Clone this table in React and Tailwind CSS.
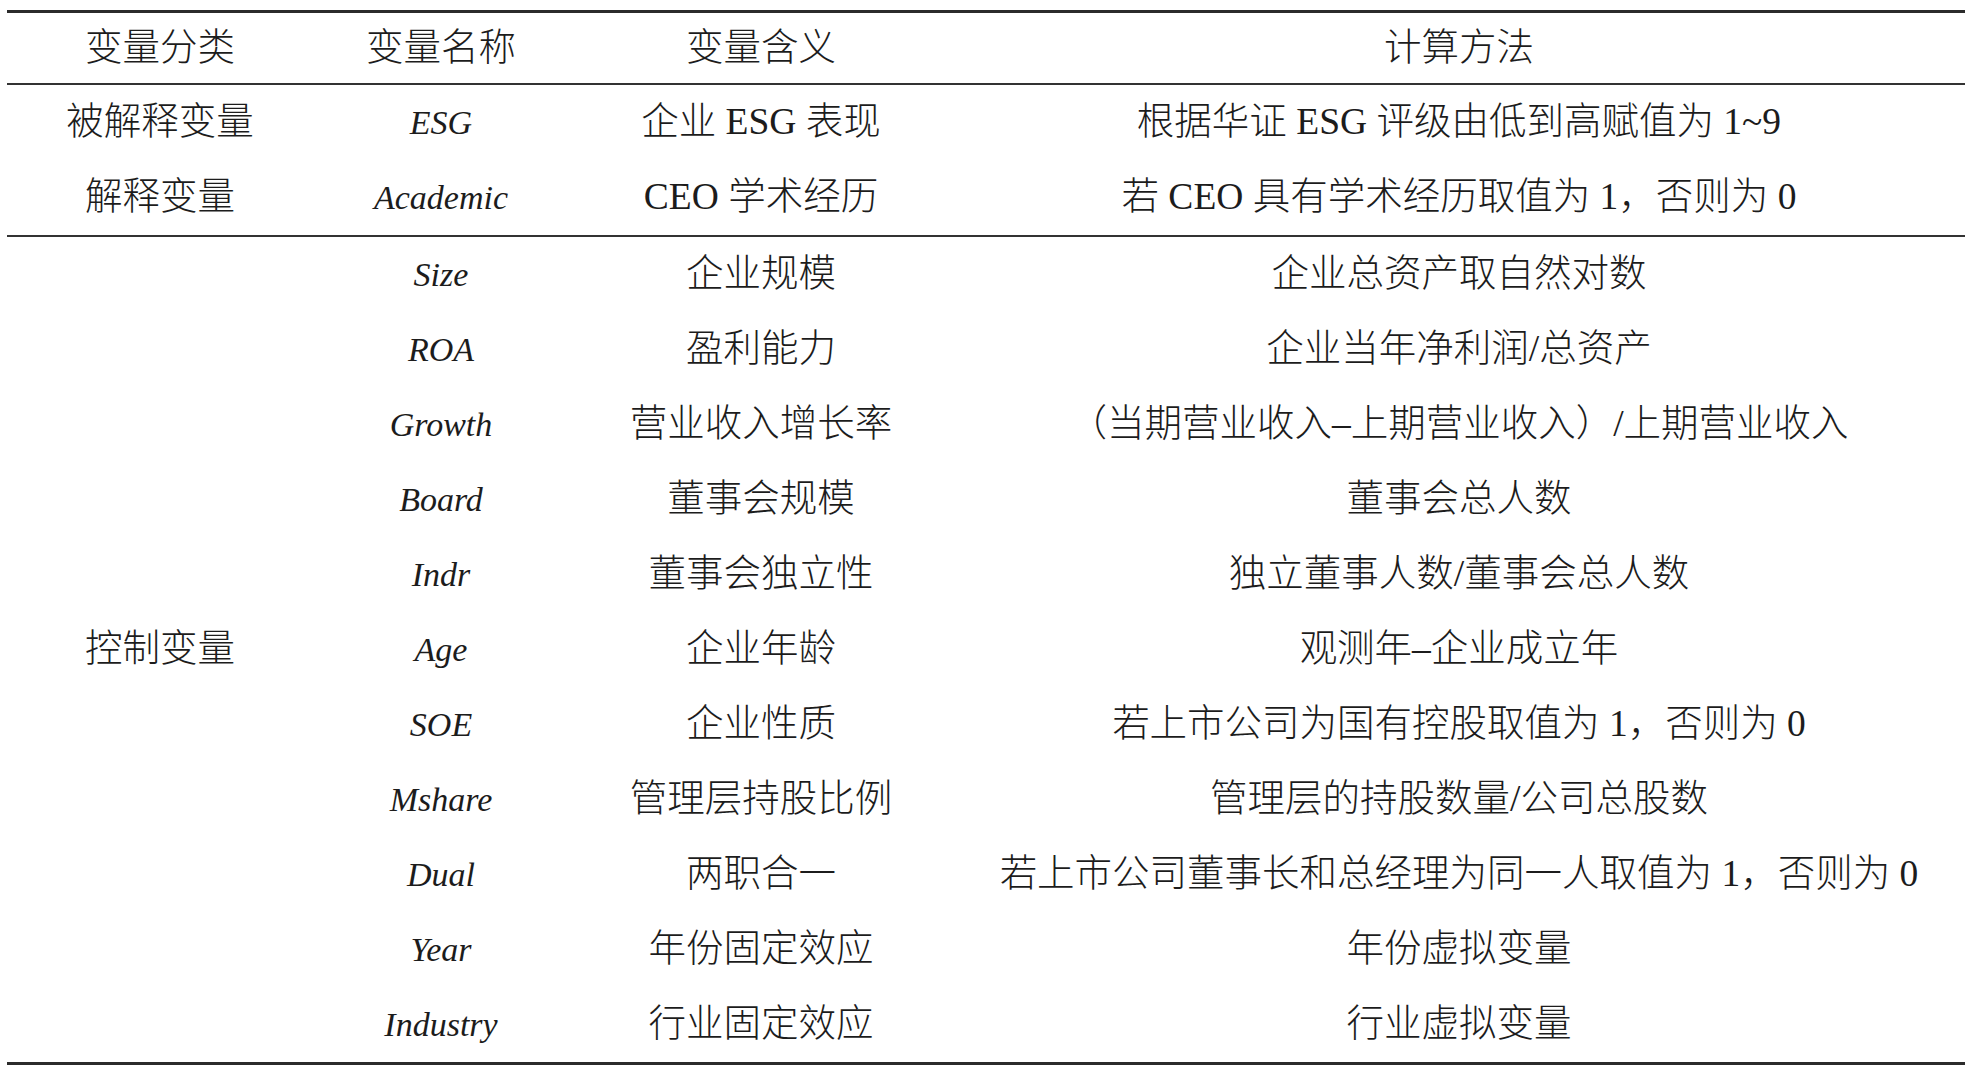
import React from 'react';

const rows = [
  ['Size', '企业规模', '企业总资产取自然对数'],
  ['ROA', '盈利能力', '企业当年净利润/总资产'],
  ['Growth', '营业收入增长率', '（当期营业收入–上期营业收入）/上期营业收入'],
  ['Board', '董事会规模', '董事会总人数'],
  ['Indr', '董事会独立性', '独立董事人数/董事会总人数'],
  ['Age', '企业年龄', '观测年–企业成立年'],
  ['SOE', '企业性质', '若上市公司为国有控股取值为 1，否则为 0'],
  ['Mshare', '管理层持股比例', '管理层的持股数量/公司总股数'],
  ['Dual', '两职合一', '若上市公司董事长和总经理为同一人取值为 1，否则为 0'],
  ['Year', '年份固定效应', '年份虚拟变量'],
  ['Industry', '行业固定效应', '行业虚拟变量'],
];

const cols = 'grid grid-cols-[306px_256px_384px_1fr]';
const cell = 'flex items-center justify-center whitespace-nowrap';
const name = 'italic text-[34px]';

export default function App() {
  return (
    <div
      className="bg-white w-[1971px] h-[1073px] pl-[7px] pr-[6px] pt-[10px] text-[37.5px] text-[#1c1c1c] font-light"
      style={{ fontFamily: "'Liberation Serif', 'Noto Sans CJK SC', serif" }}
    >
      <div className="border-t-[3px] border-b-[3px] border-[#2b2b2b]">
        {/* header */}
        <div className={`${cols} h-[72px] border-b-2 border-[#333]`}>
          <div className={cell}>变量分类</div>
          <div className={cell}>变量名称</div>
          <div className={cell}>变量含义</div>
          <div className={cell}>计算方法</div>
        </div>

        {/* dependent / explanatory */}
        <div className={`${cols} grid-rows-[75px_75px] border-b-2 border-[#333]`}>
          <div className={cell}>被解释变量</div>
          <div className={`${cell} ${name}`}>ESG</div>
          <div className={cell}>企业 ESG 表现</div>
          <div className={cell}>根据华证 ESG 评级由低到高赋值为 1~9</div>
          <div className={cell}>解释变量</div>
          <div className={`${cell} ${name}`}>Academic</div>
          <div className={cell}>CEO 学术经历</div>
          <div className={cell}>若 CEO 具有学术经历取值为 1，否则为 0</div>
        </div>

        {/* controls */}
        <div className={`${cols} grid-rows-[repeat(11,75px)]`}>
          <div className={`${cell} row-span-11`}>控制变量</div>
          {rows.map(([v, m, c]) => (
            <React.Fragment key={v}>
              <div className={`${cell} ${name}`}>{v}</div>
              <div className={cell}>{m}</div>
              <div className={cell}>{c}</div>
            </React.Fragment>
          ))}
        </div>
      </div>
    </div>
  );
}
